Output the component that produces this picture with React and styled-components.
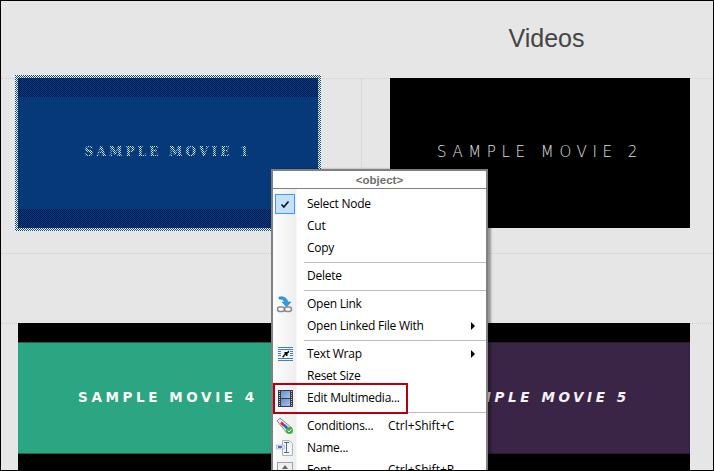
import React from "react";
import styled, { createGlobalStyle } from "styled-components";

const Global = createGlobalStyle`
  html, body { margin: 0; padding: 0; background: #e6e6e6; }
`;

const Frame = styled.div`
  position: relative;
  box-sizing: border-box;
  width: 714px;
  height: 471px;
  border: 1px solid #000;
  background: #e6e6e6;
  overflow: hidden;
  font-family: "Liberation Sans", sans-serif;
`;

const Header = styled.header`
  display: grid;
  grid-template-columns: 300px 300px;
  column-gap: 72px;
  height: 77px;
  padding-left: 17px;
  box-sizing: border-box;
`;

const Heading = styled.h1`
  grid-column: 2;
  margin: 0;
  padding: 23px 0 0 13px;
  text-align: center;
  font-size: 25px;
  line-height: 28px;
  font-weight: 400;
  color: #444;
`;

const Row = styled.section`
  display: grid;
  grid-template-columns: 300px 300px;
  column-gap: 72px;
  padding-left: 17px;
  height: ${(p) => p.$height}px;
  box-sizing: border-box;
  border-top: 1px dotted #cfcfcf;
  position: relative;
`;

const Spacer = styled.div`
  height: 69px;
  border-top: 1px dotted #cfcfcf;
`;

const ColumnRule = styled.div`
  position: absolute;
  left: 360px;
  top: 0;
  height: 175px;
  border-left: 1px dotted #cfcfcf;
`;

const Card = styled.div`
  position: relative;
  width: 300px;
  height: 150px;
  margin-top: -1px;
  background: #000;
  display: flex;
  align-items: center;
`;

const Band = styled.div`
  width: 100%;
  height: 112px;
  background: ${(p) => p.$color};
  border-top: ${(p) => (p.$line ? `1px solid ${p.$line}` : "none")};
  border-bottom: ${(p) => (p.$line ? `1px solid ${p.$line}` : "none")};
  box-sizing: border-box;
  display: flex;
  align-items: center;
  justify-content: center;
  padding-bottom: 3px;
`;

const MovieTitle = styled.span`
  white-space: nowrap;
  font-family: ${(p) => p.$font};
  font-size: ${(p) => p.$size}px;
  font-weight: ${(p) => p.$weight};
  font-style: ${(p) => (p.$italic ? "italic" : "normal")};
  letter-spacing: ${(p) => p.$spacing}px;
  color: ${(p) => p.$color};
  position: relative;
  z-index: 1;
`;

const Dither = styled.div`
  position: absolute;
  inset: 0;
  z-index: 2;
  background-image: repeating-conic-gradient(#003c8c 0 25%, transparent 0 50%);
  background-size: 2px 2px;
`;

const Selection = styled.div`
  position: absolute;
  inset: -3px;
  z-index: 0;
  background-image: repeating-conic-gradient(#ffffff 0 25%, #0a4a8c 0 50%);
  background-size: 2px 2px;
`;

const CardInner = styled.div`
  position: absolute;
  inset: 0;
  display: flex;
  align-items: center;
  background: ${(p) => p.$edge};
  z-index: 1;
`;

const Menu = styled.div`
  position: absolute;
  left: 270px;
  top: 168px;
  width: 217px;
  box-sizing: border-box;
  border: 2px solid #808080;
  border-bottom: none;
  background: #fff;
  box-shadow: 3px 0 2px rgba(0, 0, 0, 0.35);
  font-family: "Open Sans", sans-serif;
  font-size: 12px;
  letter-spacing: -0.25px;
  color: #000;
  z-index: 5;
`;

const MenuTitle = styled.div`
  height: 17px;
  line-height: 18px;
  text-align: center;
  font-family: "Liberation Sans", sans-serif;
  font-size: 11.5px;
  letter-spacing: 0;
  font-weight: 700;
  color: #6e6e6e;
  border-bottom: 1px solid #808080;
  background: #fff;
`;

const MenuBody = styled.div`
  padding-top: 4px;
  background: linear-gradient(to right, #fdfdfd 0, #eeeeee 23px, #fff 24px);
`;

const Item = styled.div`
  position: relative;
  display: flex;
  align-items: center;
  height: 22px;
  padding-left: 34px;
  line-height: 22px;
  white-space: nowrap;
`;

const Shortcut = styled.span`
  position: absolute;
  left: 115px;
  letter-spacing: 0;
`;

const IconSlot = styled.span`
  position: absolute;
  left: 3px;
  top: 2px;
  width: 18px;
  height: 18px;
  display: flex;
  align-items: center;
  justify-content: center;
`;

const CheckBox = styled.span`
  position: absolute;
  left: 2px;
  top: 1px;
  width: 18px;
  height: 18px;
  background: #c4e1ff;
  border: 1px solid #3d9bf5;
  display: flex;
  align-items: center;
  justify-content: center;
`;

const Arrow = styled.span`
  position: absolute;
  left: 198px;
  top: 7px;
  width: 0;
  height: 0;
  border-left: 4px solid #000;
  border-top: 4px solid transparent;
  border-bottom: 4px solid transparent;
`;

const Separator = styled.div`
  height: 6px;
  margin-left: 31px;
  position: relative;
  &::after {
    content: "";
    position: absolute;
    left: 0;
    right: 0;
    top: 3px;
    height: 1px;
    background: #bcbcbc;
  }
`;

const Highlight = styled.div`
  position: absolute;
  left: 272px;
  top: 382px;
  width: 135px;
  height: 31px;
  box-sizing: border-box;
  border: 2px solid #b5000f;
  z-index: 6;
`;

const LinkIcon = () => (
  <svg width="18" height="18" viewBox="0 0 18 18">
    <path d="M3 2 C8 1 11 3 12 7 L15 7 L10.5 12 L6 7 L8.5 7 C8 5 6 4 3 4 Z" fill="#2e9be6" stroke="#1b78c4" strokeWidth="0.5" />
    <rect x="1.5" y="12" width="7" height="4.5" rx="2.2" fill="none" stroke="#8a8a8a" strokeWidth="1.5" />
    <rect x="8.5" y="12" width="7" height="4.5" rx="2.2" fill="none" stroke="#8a8a8a" strokeWidth="1.5" />
  </svg>
);

const WrapIcon = () => (
  <svg width="15" height="15" viewBox="0 0 15 15">
    <path d="M0 .5H15M0 2.5H15M0 4.5H3M0 6.5H3M0 8.5H3M12 4.5H15M12 6.5H15M12 8.5H15M0 11.5H15M0 13.5H15" stroke="#3f7fc4" strokeWidth="1" fill="none" />
    <path d="M4 10 L6.5 7 L6.5 5 L9 5 L11 3.5 L11 5.5 L9.5 6.5 L9.5 9 L8 9 L7.5 7.5 L5.5 10.5 Z" fill="#000" />
  </svg>
);

const FilmIcon = () => (
  <svg width="15" height="17" viewBox="0 0 15 17">
    <defs>
      <linearGradient id="film" x1="0" y1="0" x2="1" y2="1">
        <stop offset="0" stopColor="#5f8fd6" />
        <stop offset="1" stopColor="#a8c2ea" />
      </linearGradient>
    </defs>
    <rect x="0" y="0" width="15" height="17" fill="#3a3a3a" />
    <rect x="3" y="1" width="9" height="7" fill="url(#film)" />
    <rect x="3" y="9" width="9" height="7" fill="url(#film)" />
    <path d="M1.5 1V16M13.5 1V16" stroke="#c8c8c8" strokeWidth="1" strokeDasharray="1 1" />
  </svg>
);

const TagIcon = () => (
  <svg width="18" height="18" viewBox="0 0 18 18">
    <path d="M1 4 L4 1 L16 11 L11 16 Z" fill="#dfe3ea" stroke="#8f8f8f" strokeWidth="1" />
    <path d="M5 5.5 L8 8.5" stroke="#d8262c" strokeWidth="2.5" />
    <path d="M8 8 L11.5 11.5" stroke="#2a62cc" strokeWidth="2.5" />
    <circle cx="13.5" cy="13.5" r="3.5" fill="#3fae3a" />
    <path d="M11.8 13.5 L13.2 15 L15.4 12.2" stroke="#fff" strokeWidth="1" fill="none" />
  </svg>
);

const NameIcon = () => (
  <svg width="18" height="18" viewBox="0 0 18 18">
    <path d="M6.5 1.5 H13 L16.5 4.5 V16.5 H6.5 Z" fill="#f3f6f8" stroke="#a9b4ba" strokeWidth="1" />
    <rect x="0.5" y="6" width="8" height="4" fill="#cfe0f2" stroke="#8fa6c0" strokeWidth="0.5" />
    <path d="M2 8 H6" stroke="#2548b8" strokeWidth="1.5" />
    <path d="M8 3.5 H13 M10.5 3.5 V13.5 M8 13.5 H13" stroke="#5c6a72" strokeWidth="1" fill="none" />
  </svg>
);

const FontIcon = () => (
  <svg width="18" height="18" viewBox="0 0 18 18">
    <rect x="1.5" y="1.5" width="15" height="15" fill="#eef0f0" stroke="#a0a0a0" strokeWidth="1" />
    <path d="M9 4 L12 8 H6 Z" fill="#666" />
  </svg>
);

const CheckIcon = () => (
  <svg width="10" height="9" viewBox="0 0 10 9">
    <path d="M1.5 4.5 L3.8 7 L8.5 1.5" stroke="#111" strokeWidth="1.6" fill="none" />
  </svg>
);

export default function App() {
  return (
    <Frame>
      <Global />
      <Header>
        <Heading>Videos</Heading>
      </Header>

      <Row $height={175}>
        <ColumnRule />
        <Card>
          <Selection />
          <CardInner $edge="#001a44">
            <Band $color="#0b3666">
              <MovieTitle $font='"DejaVu Serif", serif' $size={12} $weight={700} $spacing={3.2} $color="#e6f0fa">
                SAMPLE MOVIE 1
              </MovieTitle>
            </Band>
          </CardInner>
          <Dither />
        </Card>
        <Card>
          <Band $color="#000">
            <MovieTitle $font='"DejaVu Sans", sans-serif' $size={15} $weight={200} $spacing={5.6} $color="#e2e2e2">
              SAMPLE MOVIE 2
            </MovieTitle>
          </Band>
        </Card>
      </Row>

      <Spacer />

      <Row $height={148}>
        <Card>
          <Band $color="#2ca582" $line="#1d5f50">
            <MovieTitle $font='"DejaVu Sans", sans-serif' $size={13.5} $weight={700} $spacing={3.6} $color="#fbfbf6">
              SAMPLE MOVIE 4
            </MovieTitle>
          </Band>
        </Card>
        <Card>
          <Band $color="#3b2546" $line="#2a1a33">
            <MovieTitle $font='"DejaVu Sans", sans-serif' $size={13.5} $weight={700} $italic $spacing={3.6} $color="#f5f3f6">
              SAMPLE MOVIE 5
            </MovieTitle>
          </Band>
        </Card>
      </Row>

      <Menu>
        <MenuTitle>&lt;object&gt;</MenuTitle>
        <MenuBody>
          <Item><CheckBox><CheckIcon /></CheckBox>Select Node</Item>
          <Item>Cut</Item>
          <Item>Copy</Item>
          <Separator />
          <Item>Delete</Item>
          <Separator />
          <Item><IconSlot><LinkIcon /></IconSlot>Open Link</Item>
          <Item>Open Linked File With<Arrow /></Item>
          <Separator />
          <Item><IconSlot><WrapIcon /></IconSlot>Text Wrap<Arrow /></Item>
          <Item>Reset Size</Item>
          <Item><IconSlot><FilmIcon /></IconSlot>Edit Multimedia...</Item>
          <Separator />
          <Item><IconSlot><TagIcon /></IconSlot>Conditions...<Shortcut>Ctrl+Shift+C</Shortcut></Item>
          <Item><IconSlot><NameIcon /></IconSlot>Name...</Item>
          <Item><IconSlot><FontIcon /></IconSlot>Font<Shortcut>Ctrl+Shift+R</Shortcut></Item>
        </MenuBody>
      </Menu>
      <Highlight />
    </Frame>
  );
}
